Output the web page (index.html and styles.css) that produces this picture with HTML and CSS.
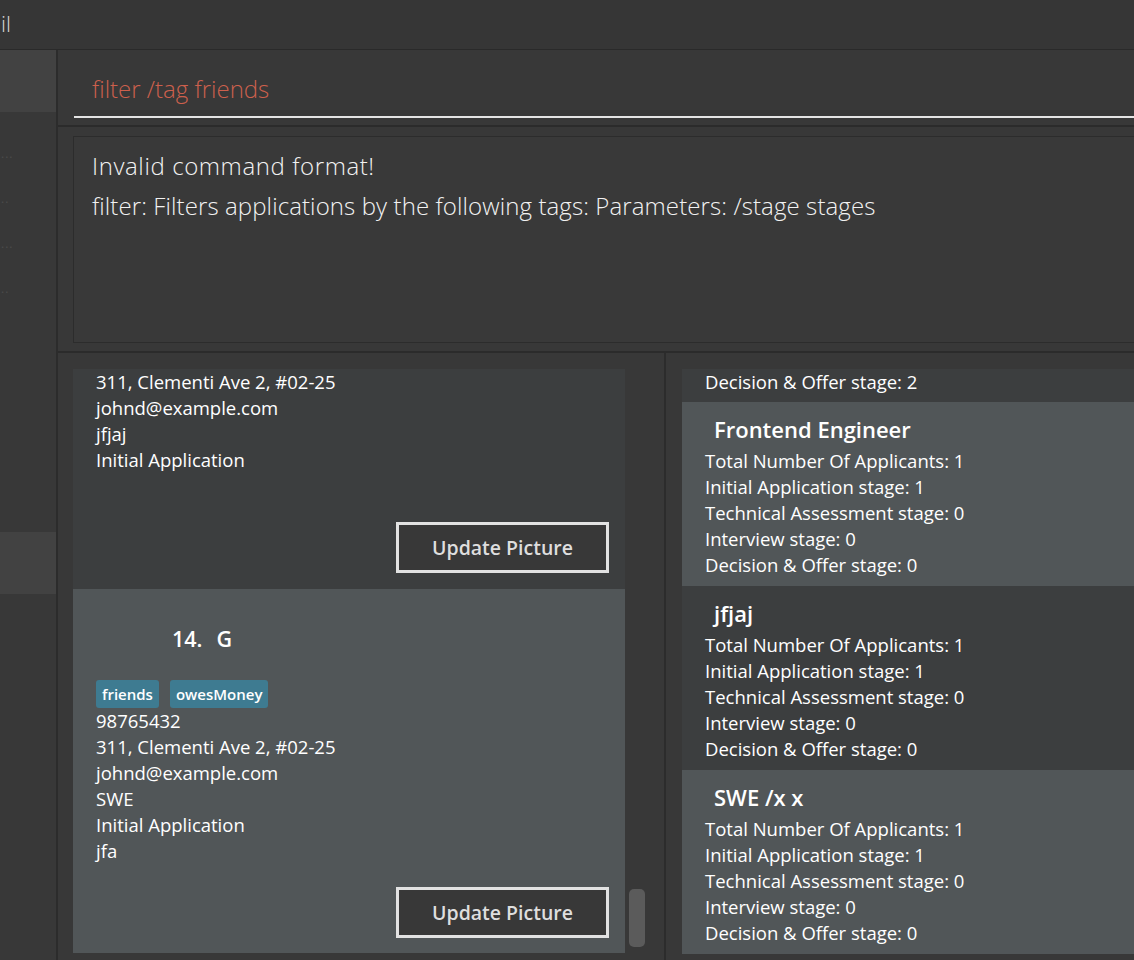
FILE: index.html
```html
<!DOCTYPE html>
<html lang="en">
<head>
<meta charset="utf-8">
<title>Applications</title>
<link rel="stylesheet" href="styles.css">
</head>
<body>
<div class="app">
  <header class="menubar"><span class="menu-item">il</span></header>
  <div class="body">
    <aside class="sidebar">
      <div class="side-block"></div>
      <div class="side-list">
        <div class="side-dots">...</div>
        <div class="side-dots">..</div>
        <div class="side-dots">...</div>
        <div class="side-dots">..</div>
      </div>
      <div class="side-block second"></div>
    </aside>
    <main class="main">
      <section class="command">
        <div class="command-field">filter /tag friends</div>
      </section>
      <section class="result">
        <div class="result-box">
          <p class="result-line">Invalid command format!</p>
          <p class="result-line">filter: Filters applications by the following tags: Parameters: /stage stages</p>
        </div>
      </section>
      <section class="lists">
        <div class="panel panel-left">
          <div class="cards">
            <div class="card even">
              <div class="line">311, Clementi Ave 2, #02-25</div>
              <div class="line">johnd@example.com</div>
              <div class="line">jfjaj</div>
              <div class="line">Initial Application</div>
              <div class="line"></div>
              <button class="update-btn">Update Picture</button>
            </div>
            <div class="card odd">
              <div class="card-head"><span class="idx">14.</span><span class="name">G</span></div>
              <div class="tags"><span class="tag">friends</span><span class="tag">owesMoney</span></div>
              <div class="line">98765432</div>
              <div class="line">311, Clementi Ave 2, #02-25</div>
              <div class="line">johnd@example.com</div>
              <div class="line">SWE</div>
              <div class="line">Initial Application</div>
              <div class="line">jfa</div>
              <button class="update-btn">Update Picture</button>
            </div>
          </div>
          <div class="scrollbar"><div class="thumb"></div></div>
        </div>
        <div class="panel panel-right">
          <div class="cards wide">
            <div class="job even partial">
              <div class="line">Decision &amp; Offer stage: 2</div>
            </div>
            <div class="job odd">
              <div class="job-title">Frontend Engineer</div>
              <div class="line">Total Number Of Applicants: 1</div>
              <div class="line">Initial Application stage: 1</div>
              <div class="line">Technical Assessment stage: 0</div>
              <div class="line">Interview stage: 0</div>
              <div class="line">Decision &amp; Offer stage: 0</div>
            </div>
            <div class="job even">
              <div class="job-title">jfjaj</div>
              <div class="line">Total Number Of Applicants: 1</div>
              <div class="line">Initial Application stage: 1</div>
              <div class="line">Technical Assessment stage: 0</div>
              <div class="line">Interview stage: 0</div>
              <div class="line">Decision &amp; Offer stage: 0</div>
            </div>
            <div class="job odd">
              <div class="job-title">SWE /x x</div>
              <div class="line">Total Number Of Applicants: 1</div>
              <div class="line">Initial Application stage: 1</div>
              <div class="line">Technical Assessment stage: 0</div>
              <div class="line">Interview stage: 0</div>
              <div class="line">Decision &amp; Offer stage: 0</div>
            </div>
          </div>
        </div>
      </section>
    </main>
  </div>
</div>
</body>
</html>
```

FILE: styles.css
```css
* { box-sizing: border-box; }

html, body {
  margin: 0;
  padding: 0;
  background: #383838;
  overflow: hidden;
}

body {
  font-family: "Open Sans", "Liberation Sans", sans-serif;
  color: #ffffff;
}

.app {
  width: 1134px;
  height: 960px;
  display: flex;
  flex-direction: column;
  overflow: hidden;
}

.menubar {
  height: 50px;
  flex: 0 0 50px;
  background: #363636;
  border-bottom: 1px solid #2a2a2a;
  display: flex;
  align-items: center;
}

.menu-item {
  font-size: 22px;
  font-weight: 300;
  color: #d6d6d6;
  padding-left: 1px;
  padding-bottom: 4px;
}

.body {
  flex: 1;
  display: flex;
  min-height: 0;
}

.sidebar {
  width: 58px;
  flex: 0 0 58px;
  background: #383838;
  border-right: 2px solid #2c2c2c;
  display: flex;
  flex-direction: column;
}

.side-block {
  height: 62px;
  background: #424242;
}

.side-list {
  height: 420px;
  padding-top: 36px;
}

.side-dots {
  height: 45px;
  font-size: 12px;
  color: #4c4c4c;
  line-height: 12px;
  padding-left: 1px;
  letter-spacing: 1px;
}

.side-block.second {
  height: 62px;
}

.main {
  flex: 1;
  display: flex;
  flex-direction: column;
  min-width: 0;
}

.command {
  height: 77px;
  flex: 0 0 77px;
  padding: 14px 0 0 16px;
  border-bottom: 2px solid #2b2b2b;
}

.command-field {
  height: 54px;
  border-bottom: 2px solid #e4e4e4;
  padding-left: 18px;
  font-size: 24px;
  line-height: 50px;
  color: #cd604d;
  font-weight: 300;
}

.result {
  height: 226px;
  flex: 0 0 226px;
  padding: 9px 0 8px 15px;
  border-bottom: 2px solid #2b2b2b;
}

.result-box {
  height: 100%;
  border: 1px solid #2c2c2c;
  border-right: none;
  padding: 9px 0 0 18px;
  background: #393939;
}

.result-line {
  margin: 0;
  font-size: 24px;
  font-weight: 300;
  letter-spacing: 0.1px;
  line-height: 40px;
  color: #f2f2f2;
  white-space: nowrap;
}

.result-line:first-child {
  letter-spacing: 0.6px;
}

.lists {
  flex: 1;
  display: flex;
  min-height: 0;
}

.panel {
  display: flex;
  padding-top: 16px;
  overflow: hidden;
}

.panel-left {
  width: 608px;
  flex: 0 0 608px;
  padding-left: 15px;
  border-right: 2px solid #2c2c2c;
}

.panel-right {
  flex: 1;
  padding-left: 16px;
  background: #383838;
}

.cards {
  width: 552px;
  display: flex;
  flex-direction: column;
}

.cards.wide {
  width: auto;
  flex: 1;
}

.even { background: #3c3e3f; }
.odd { background: #515658; }

.card {
  display: flex;
  flex-direction: column;
  padding: 0 16px 16px 23px;
}

.card.odd {
  padding-top: 37px;
  padding-bottom: 15px;
}

.line {
  font-size: 18.5px;
  line-height: 26px;
  min-height: 26px;
  white-space: nowrap;
  color: #ffffff;
}

.card-head {
  height: 26px;
  line-height: 26px;
  padding-left: 76px;
  font-size: 21.5px;
  font-weight: 600;
  margin-bottom: 28px;
  display: flex;
  gap: 14px;
}

.tags {
  display: flex;
  gap: 11px;
}

.tag {
  height: 28px;
  line-height: 28px;
  padding: 0 6px;
  background: #3e7b91;
  border-radius: 3px;
  font-size: 15px;
  font-weight: 600;
  color: #ffffff;
}

.update-btn {
  align-self: flex-end;
  margin-top: 23px;
  width: 213px;
  height: 51px;
  border: 3px solid #e2e2e2;
  background: #383838;
  color: #dedede;
  font-family: "Open Sans", "Liberation Sans", sans-serif;
  font-size: 19.5px;
  font-weight: 600;
  padding: 0;
}

.scrollbar {
  width: 16px;
  margin-left: 4px;
  padding-top: 520px;
}

.thumb {
  width: 16px;
  height: 58px;
  background: #5b5b5b;
  border-radius: 5px;
}

.job {
  padding: 12px 0 8px 23px;
}

.job.partial {
  padding-top: 0;
  padding-bottom: 7px;
}

.job-title {
  font-size: 22px;
  font-weight: 600;
  line-height: 30px;
  padding-left: 9px;
  margin-bottom: 4px;
  white-space: nowrap;
}
```
